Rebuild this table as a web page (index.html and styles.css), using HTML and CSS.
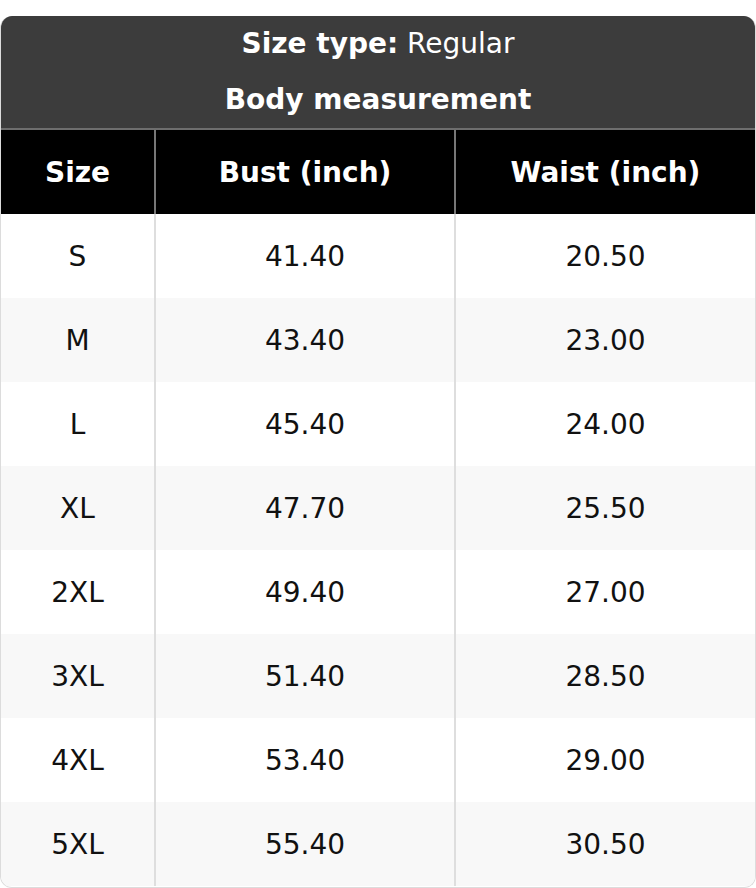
FILE: index.html
```html
<!DOCTYPE html>
<html>
<head>
<meta charset="utf-8">
<link rel="stylesheet" href="styles.css">
</head>
<body>
<div class="chart">
  <div class="head">
    <div class="line"><b>Size type:</b> Regular</div>
    <div class="line"><b>Body measurement</b></div>
  </div>
  <table class="grid">
    <colgroup><col class="c1"><col class="c2"><col class="c3"></colgroup>
    <thead>
      <tr><th>Size</th><th>Bust (inch)</th><th>Waist (inch)</th></tr>
    </thead>
    <tbody>
      <tr><td>S</td><td>41.40</td><td>20.50</td></tr>
      <tr><td>M</td><td>43.40</td><td>23.00</td></tr>
      <tr><td>L</td><td>45.40</td><td>24.00</td></tr>
      <tr><td>XL</td><td>47.70</td><td>25.50</td></tr>
      <tr><td>2XL</td><td>49.40</td><td>27.00</td></tr>
      <tr><td>3XL</td><td>51.40</td><td>28.50</td></tr>
      <tr><td>4XL</td><td>53.40</td><td>29.00</td></tr>
      <tr><td>5XL</td><td>55.40</td><td>30.50</td></tr>
    </tbody>
  </table>
</div>
</body>
</html>
```
FILE: styles.css
```css
html, body {
  margin: 0;
  padding: 0;
  background: #fff;
}
body {
  font-family: "DejaVu Sans", sans-serif;
  color: #111;
}
.chart {
  margin-top: 16px;
  width: 756px;
  height: 872px;
  box-sizing: border-box;
  border-radius: 12px;
  overflow: hidden;
  border: 1px solid #dcdcdc;
  border-top: none;
  display: flex;
  flex-direction: column;
}
.head {
  background: #3c3c3c;
  color: #fff;
  text-align: center;
  font-size: 28px;
  border-bottom: 2px solid #6e6e6e;
}
.line {
  height: 56px;
  line-height: 56px;
}
.grid {
  width: 100%;
  border-collapse: collapse;
  table-layout: fixed;
}
.c1 { width: 154px; }
.c2 { width: 300px; }
th {
  background: #000;
  color: #fff;
  font-weight: bold;
  font-size: 28px;
  height: 84px;
  padding: 0;
  border-left: 2px solid #777;
}
th:first-child, td:first-child { border-left: none; }
td {
  height: 84px;
  padding: 0;
  text-align: center;
  font-size: 28px;
  border-left: 2px solid #dedede;
}
tbody tr:nth-child(even) td {
  background: #f8f8f8;
}
```
